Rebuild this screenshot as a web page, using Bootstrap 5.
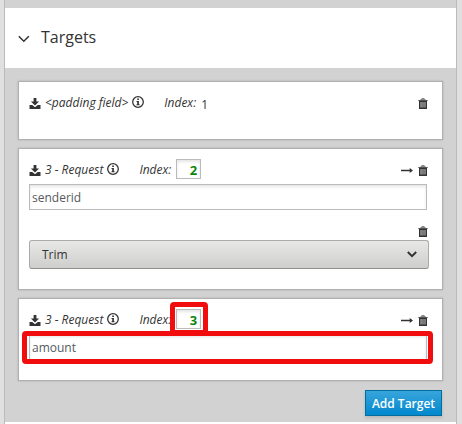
<!DOCTYPE html>
<html lang="en">
<head>
<meta charset="utf-8">
<meta name="viewport" content="width=device-width, initial-scale=1">
<title>Targets</title>
<link href="https://cdn.jsdelivr.net/npm/bootstrap@5.3.0/dist/css/bootstrap.min.css" rel="stylesheet">
<style>
body{background:#e0e0e0;font-family:"Open Sans",sans-serif;font-size:12px;line-height:18px;color:#333;height:424px;overflow:hidden}
svg{display:block;flex:none}
.panel{width:453px;height:424px;margin-left:4px;background:#d2d2d2;border:solid #bbb;border-width:0 1px;padding-top:8px}
.panel-head{height:60px;padding:0 0 2px 13px;gap:11px}
.panel-head h1{font-size:16px;line-height:24px;font-weight:400;margin:0}
.targets{padding:13px 13px 0 13px}
.target{border:1px solid #b0b0b0;border-radius:0;width:425px;padding:10px 13px 0 10px;box-shadow:0 0 2px rgba(0,0,0,.18);color:inherit}
.t-pad{height:59px;margin-bottom:8px}
.t-trim{height:142px;margin-bottom:8px}
.t-plain{height:83px}
.line{height:20px}
.line em{margin-top:2px}
.line .dl{margin:3px 4px 0 0}
.line .info{margin-left:4px}
.line .idx{margin-left:20px}
.tools{margin:2px 1px 0 auto;gap:5px}
.value{margin:5px 0 0 5px}
.num{width:25px;height:20px;padding:2px 3px 0 0;border:1px solid #bbb;border-radius:0;background:#fff;box-shadow:inset 0 2px 3px rgba(0,0,0,.1);font-weight:700;color:#0a870a;text-align:right;font-size:13px;line-height:18px;margin-left:5px}
.field{width:398px;height:26px;margin-top:5px;padding:0 2px;border:1px solid #bbb;border-radius:0;box-shadow:inset 0 2px 3px rgba(0,0,0,.1);font-size:12px;line-height:24px;color:#555a60}
.step-tools{padding:16px 1px 3px 0}
.pick{width:400px;height:29px;border:1px solid #aaa;border-bottom-color:#8f8f8a;border-radius:3px;background:linear-gradient(#e8e8e7,#cececc);padding:0 11px 0 12px;color:#333;font-size:12px;line-height:1}
.add{width:77px;height:26px;border:1px solid #006e9c;border-radius:0;background:linear-gradient(#39a5dc,#0088ce);color:#fff;font-size:12px;font-weight:600;line-height:25px;padding:0;margin:9px 1px 0 0;box-shadow:0 2px 3px rgba(0,0,0,.12)}
.mark-box{position:absolute;border:5px solid #f10d0d;border-radius:4px;pointer-events:none}
.mark-num{left:151px;top:3px;width:38px;height:33px}
.mark-field{left:3px;top:32px;width:411px;height:33px}
.panel-foot{height:2px}
</style>
<script src="https://cdn.jsdelivr.net/npm/bootstrap@5.3.0/dist/js/bootstrap.bundle.min.js"></script>
</head>
<body>
<svg width="0" height="0" class="d-none">
<symbol id="dl" viewBox="0 0 12 11"><path fill="#333" d="M4.6 0h2.8v3.4h2.7L6 7.5 1.9 3.4h2.7zM.5 7h2.8L6 9.2 8.7 7h2.8v4H.5z"/></symbol>
<symbol id="info" viewBox="0 0 12 12"><circle cx="6" cy="6" r="5.3" fill="none" stroke="#333" stroke-width="1.3"/><path fill="#333" d="M5.2 2.5h1.7v1.5H5.2zM4.5 5h2.4v3.2h.7v1H4.5v-1h.7V6h-.7z"/></symbol>
<symbol id="trash" viewBox="0 0 10 11"><path fill="#888" d="M3.5 0h3v1h1v1h-5V1h1z"/><path fill="#555" d="M.3 2h9.4v1H.3z"/><path fill="#333" d="M1 3h8v8H1z"/><path fill="#aaa" d="M2.4 4h1.3v5.6H2.4zM4.4 4h1.2v5.6H4.4zM6.4 4h1.2v5.6H6.4z"/></symbol>
<symbol id="arrow" viewBox="0 0 12 7"><path fill="#333" d="M0 2.7h8.7V1L12 3.5 8.7 6V4.3H0z"/></symbol>
</svg>
<main class="panel d-flex flex-column">
<header class="panel-head bg-white d-flex align-items-center flex-shrink-0">
<svg width="12" height="8" viewBox="0 0 12 8" class="mt-1"><path d="M.8 1.3l5 5 5-5" fill="none" stroke="#333" stroke-width="1.5"/></svg>
<h1>Targets</h1>
</header>
<section class="targets flex-grow-1">
<div class="card target t-pad">
<div class="line d-flex align-items-center">
<svg class="dl" width="12" height="11"><use href="#dl"/></svg><em>&lt;padding field&gt;</em><svg class="info" width="12" height="12"><use href="#info"/></svg><em class="idx">Index:</em><span class="value">1</span>
<div class="tools d-flex align-items-center"><svg width="10" height="11"><use href="#trash"/></svg></div>
</div>
</div>
<div class="card target t-trim">
<div class="line d-flex align-items-center">
<svg class="dl" width="12" height="11"><use href="#dl"/></svg><em>3 - Request</em><svg class="info" width="12" height="12"><use href="#info"/></svg><em class="idx">Index:</em><input class="form-control num" value="2" aria-label="Index">
<div class="tools d-flex align-items-center"><svg width="12" height="7"><use href="#arrow"/></svg><svg width="10" height="11"><use href="#trash"/></svg></div>
</div>
<input class="form-control field" value="senderid" aria-label="Target name">
<div class="step-tools d-flex justify-content-end"><svg width="10" height="11"><use href="#trash"/></svg></div>
<button class="btn pick d-flex align-items-center justify-content-between">Trim<svg width="10" height="7" viewBox="0 0 10 7"><path d="M.8 1L5 5.2 9.2 1" fill="none" stroke="#333" stroke-width="2"/></svg></button>
</div>
<div class="card target t-plain">
<div class="line d-flex align-items-center">
<svg class="dl" width="12" height="11"><use href="#dl"/></svg><em>3 - Request</em><svg class="info" width="12" height="12"><use href="#info"/></svg><em class="idx">Index:</em><input class="form-control num" value="3" aria-label="Index">
<div class="tools d-flex align-items-center"><svg width="12" height="7"><use href="#arrow"/></svg><svg width="10" height="11"><use href="#trash"/></svg></div>
</div>
<input class="form-control field" value="amount" aria-label="Target name">
<div class="mark-box mark-num"></div>
<div class="mark-box mark-field"></div>
</div>
<div class="d-flex justify-content-end"><button class="btn add">Add Target</button></div>
</section>
<footer class="panel-foot bg-white flex-shrink-0"></footer>
</main>
</body>
</html>
